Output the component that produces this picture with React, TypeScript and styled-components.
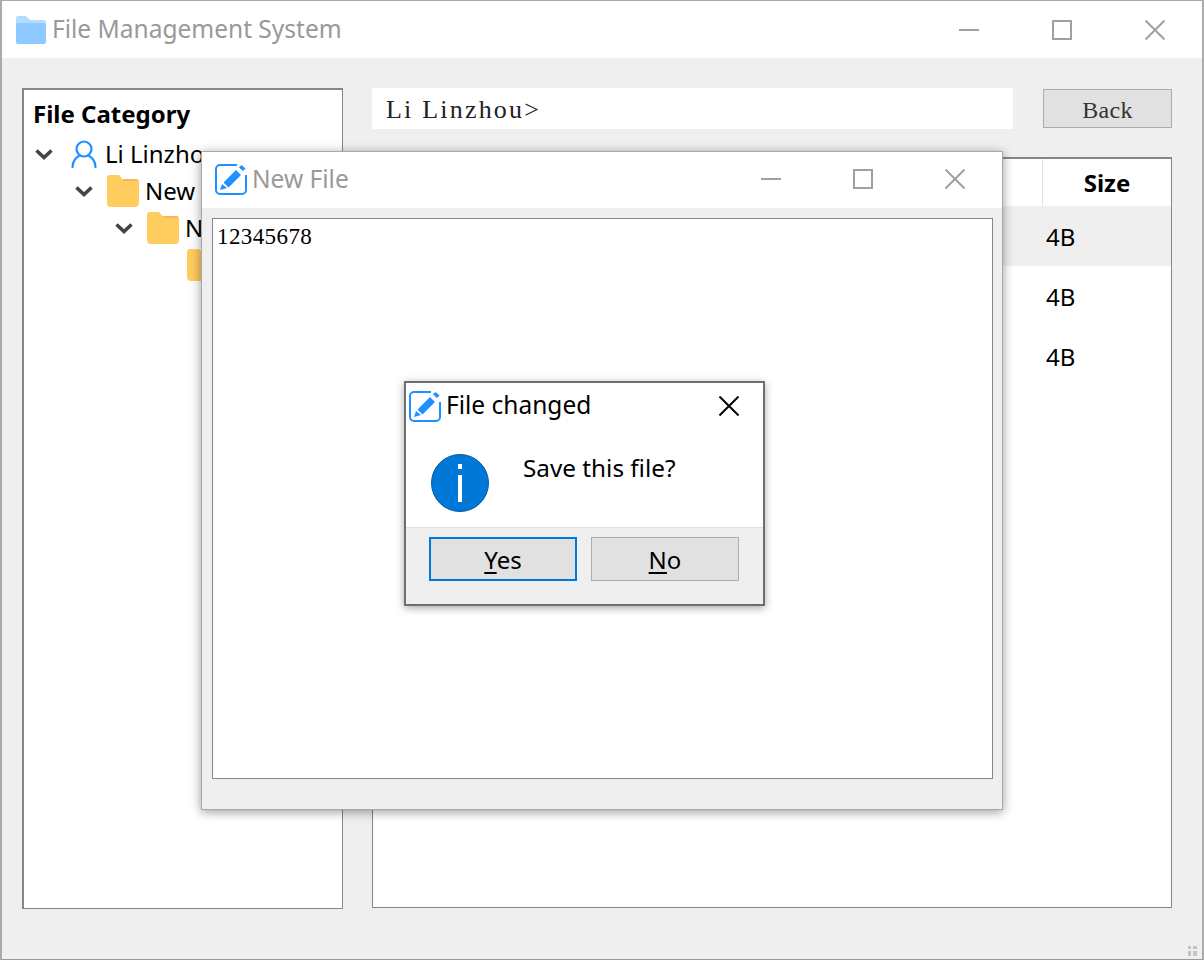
import React from 'react';
import styled, { createGlobalStyle } from 'styled-components';

const GlobalStyle = createGlobalStyle`
    html, body {
        margin: 0;
        padding: 0;
        background: #efefef;
    }
    * {
        box-sizing: border-box;
    }
`;

const UI_FONT = `"Noto Sans", "Open Sans", sans-serif`;
const SERIF_FONT = `"Liberation Serif", "DejaVu Serif", serif`;

const Screen = styled.div`
    position: relative;
    width: 1204px;
    height: 960px;
    overflow: hidden;
    display: flex;
    flex-direction: column;
    background: #efefef;
    border-top: 1px solid #aaaaaa;
    border-left: 2px solid #aaaaaa;
    border-right: 2px solid #aaaaaa;
    border-bottom: 1px solid #9a9a9a;
    font-family: ${UI_FONT};
    color: #000;
`;

const TitleBar = styled.div`
    height: 57px;
    flex: none;
    display: flex;
    align-items: center;
    background: #fff;
    padding-left: 14px;
`;

const TitleText = styled.span`
    font-size: 24.5px;
    color: #999999;
    margin: -2px 0 0 6px;
    white-space: nowrap;
    flex: 1;
`;

const WinControls = styled.div<{ $width: number }>`
    display: flex;
    width: ${p => p.$width}px;
    margin-right: 37px;
    justify-content: space-between;
    align-items: center;
    flex: none;
`;

const Main = styled.div`
    flex: 1;
    display: flex;
    gap: 29px;
    padding: 30px 30px 50px 20px;
    border-bottom: 1px solid #fff;
`;

const TreePanel = styled.div`
    width: 321px;
    height: 821px;
    flex: none;
    background: #fff;
    border: 2px solid #85858d;
    border-right-width: 1px;
    border-bottom-width: 1px;
    padding: 7px 0 0 9px;
`;

const TreeTitle = styled.div`
    font-size: 24px;
    font-weight: 700;
    line-height: 34px;
    margin-bottom: 4px;
`;

const TreeRow = styled.div<{ $level: number }>`
    display: flex;
    align-items: center;
    height: 37px;
    padding-left: ${p => p.$level * 40}px;
    font-size: 24px;
    white-space: nowrap;
`;

const TreeArrow = styled.span`
    width: 24px;
    display: flex;
    align-items: center;
    margin-left: 1px;
    margin-right: 9px;
    flex: none;
`;

const TreeLabel = styled.span<{ $user?: boolean }>`
    margin-left: ${p => (p.$user ? 8 : 6)}px;
`;

const UserSlot = styled.span`
    display: flex;
    margin-left: 4px;
`;

const RightColumn = styled.div`
    flex: 1;
    display: flex;
    flex-direction: column;
`;

const PathRow = styled.div`
    display: flex;
    justify-content: space-between;
    align-items: center;
    height: 41px;
    margin-bottom: 28px;
`;

const PathBar = styled.div`
    width: 641px;
    height: 41px;
    background: #fff;
    font-family: ${SERIF_FONT};
    font-size: 26px;
    letter-spacing: 2.2px;
    line-height: 43px;
    padding-left: 14px;
    color: #222;
`;

const BackButton = styled.button`
    width: 129px;
    height: 39px;
    padding: 3px 0 0;
    background: #e1e1e1;
    border: 1px solid #adadad;
    font-family: ${SERIF_FONT};
    font-size: 24px;
    letter-spacing: 0.3px;
    color: #333;
`;

const FileTable = styled.div`
    width: 800px;
    height: 751px;
    background: #fff;
    border: 1px solid #85858d;
    border-top-width: 2px;
`;

const TableHeader = styled.div`
    display: flex;
    justify-content: flex-end;
    height: 47px;
`;

const HeaderCell = styled.div`
    width: 129px;
    border-left: 1px solid #e3e3e3;
    font-size: 24px;
    font-weight: 700;
    line-height: 48px;
    text-align: center;
`;

const TableRow = styled.div<{ $selected?: boolean }>`
    display: flex;
    justify-content: flex-end;
    height: 60px;
    background: ${p => (p.$selected ? '#efefef' : '#fff')};
`;

const SizeCell = styled.div`
    width: 129px;
    font-size: 24px;
    line-height: 61px;
    padding-left: 4px;
`;

const SizeGrip = styled.svg`
    position: absolute;
    right: 5px;
    bottom: 3px;
`;

const EditorWindow = styled.div`
    position: absolute;
    left: 199px;
    top: 150px;
    width: 802px;
    height: 659px;
    display: flex;
    flex-direction: column;
    background: #efefef;
    border: 1px solid #a8a8a8;
    box-shadow: 0 2px 10px rgba(0, 0, 0, 0.4);
`;

const EditorTitleBar = styled(TitleBar)`
    height: 56px;
    padding: 0 0 2px 13px;

    ${TitleText} {
        margin-left: 5px;
    }
`;

const EditorBody = styled.div`
    flex: 1;
    padding: 10px 9px 30px 10px;
`;

const EditorText = styled.div`
    height: 561px;
    background: #fff;
    border: 1px solid #85858d;
    padding: 3px 4px;
    font-family: ${SERIF_FONT};
    font-size: 23px;
    letter-spacing: 0.4px;
    line-height: 30px;
`;

const MessageBox = styled.div`
    position: absolute;
    left: 402px;
    top: 380px;
    width: 361px;
    height: 225px;
    display: flex;
    flex-direction: column;
    background: #fff;
    border: 2px solid #6e6e6e;
    box-shadow: 0 2px 8px rgba(0, 0, 0, 0.35);
`;

const MessageTitle = styled.div`
    height: 45px;
    flex: none;
    display: flex;
    align-items: center;
    padding-left: 3px;
    font-size: 24.5px;
`;

const MessageTitleText = styled.span`
    margin: -3px 0 0 5px;
    flex: 1;
`;

const MessageClose = styled.span`
    display: flex;
    margin-right: 24px;
`;

const MessageContent = styled.div`
    flex: 1;
    display: flex;
    align-items: flex-start;
    padding: 26px 0 0 25px;
    font-size: 24.3px;
`;

const InfoIcon = styled.div`
    width: 58px;
    height: 58px;
    flex: none;
    border-radius: 50%;
    background: #0078d7;
    border: 1px solid #0a5aa0;
    display: flex;
    align-items: center;
    justify-content: center;
`;

const MessageText = styled.div`
    margin-left: 34px;
    margin-top: -4px;
    line-height: 36px;
`;

const ButtonBar = styled.div`
    height: 77px;
    flex: none;
    display: flex;
    gap: 14px;
    padding: 9px 0 0 23px;
    background: #efefef;
    border-top: 1px solid #dfdfdf;
`;

const DialogButton = styled.button<{ $focused?: boolean }>`
    width: 148px;
    height: 44px;
    padding: 0;
    background: #e1e1e1;
    border: ${p => (p.$focused ? '2px solid #0078d7' : '1px solid #adadad')};
    font-family: ${UI_FONT};
    font-size: 24px;
    color: #000;
`;

const Mnemonic = styled.span`
    text-decoration: underline;
    text-underline-offset: 3px;
`;

const Minimize = ({ color = '#a0a0a0' }: { color?: string }) => (
    <svg width="20" height="20" viewBox="0 0 20 20">
        <path d="M0 10h20" stroke={color} strokeWidth="2" />
    </svg>
);

const Maximize = ({ color = '#a0a0a0' }: { color?: string }) => (
    <svg width="20" height="20" viewBox="0 0 20 20">
        <rect x="1" y="1" width="18" height="18" fill="none" stroke={color} strokeWidth="2" />
    </svg>
);

const CloseIcon = ({ color = '#a0a0a0', sw = 2 }: { color?: string; sw?: number }) => (
    <svg width="20" height="20" viewBox="0 0 20 20">
        <path d="M0.5 0.5l19 19M19.5 0.5l-19 19" stroke={color} strokeWidth={sw} fill="none" />
    </svg>
);

const BlueFolder = () => (
    <svg width="30" height="28" viewBox="0 0 30 28">
        <path d="M0 2a2 2 0 0 1 2-2h8l4 4h14a2 2 0 0 1 2 2v3H0z" fill="#b5dcff" />
        <path d="M0 7h28a2 2 0 0 1 2 2v17a2 2 0 0 1-2 2H2a2 2 0 0 1-2-2z" fill="#8ecaff" />
    </svg>
);

const YellowFolder = () => (
    <svg width="32" height="32" viewBox="0 0 32 32" style={{ flex: 'none' }}>
        <path d="M16 4h13a3 3 0 0 1 3 3v3H16z" fill="#f9b55a" />
        <path d="M0 3a3 3 0 0 1 3-3h9l5 6h15v22a4 4 0 0 1-4 4H4a4 4 0 0 1-4-4z" fill="#ffcd5e" />
    </svg>
);

const EditIcon = () => (
    <svg width="32" height="32" viewBox="0 0 32 32" style={{ flex: 'none' }}>
        <path
            d="M22 2H5a4 4 0 0 0-4 4v21a4 4 0 0 0 4 4h22a4 4 0 0 0 4-4V12"
            fill="none"
            stroke="#1e90ff"
            strokeWidth="2"
        />
        <path d="M21 7l5 5-12.500 12.500-5-5zM7 21l5 4-7 2zM24 4.500l2.500-2.500 4 3.500-2.500 2.500z" fill="#1e90ff" />
    </svg>
);

const UserIcon = () => (
    <svg width="26" height="28" viewBox="0 0 26 28" style={{ flex: 'none' }}>
        <circle cx="13" cy="9" r="7.500" fill="none" stroke="#1e90ff" strokeWidth="2.200" />
        <path d="M1.500 27c0-6 4-10 6.500-11M24.500 27c0-6-4-10-6.500-11" fill="none" stroke="#1e90ff" strokeWidth="2.200" strokeLinecap="round" />
    </svg>
);

const ChevronDown = () => (
    <svg width="20" height="12" viewBox="0 0 20 12">
        <path d="M2.500 2.500L10 9.500l7.500-7" fill="none" stroke="#444" strokeWidth="3.600" />
    </svg>
);

const App: React.FC = () => {
    return (
        <Screen>
            <GlobalStyle />
            <TitleBar>
                <BlueFolder />
                <TitleText>File Management System</TitleText>
                <WinControls $width={206}>
                    <Minimize />
                    <Maximize />
                    <CloseIcon />
                </WinControls>
            </TitleBar>
            <Main>
                <TreePanel>
                    <TreeTitle>File Category</TreeTitle>
                    <TreeRow $level={0}>
                        <TreeArrow>
                            <ChevronDown />
                        </TreeArrow>
                        <UserSlot>
                            <UserIcon />
                        </UserSlot>
                        <TreeLabel $user>Li Linzho</TreeLabel>
                    </TreeRow>
                    <TreeRow $level={1}>
                        <TreeArrow>
                            <ChevronDown />
                        </TreeArrow>
                        <YellowFolder />
                        <TreeLabel>New</TreeLabel>
                    </TreeRow>
                    <TreeRow $level={2}>
                        <TreeArrow>
                            <ChevronDown />
                        </TreeArrow>
                        <YellowFolder />
                        <TreeLabel>N</TreeLabel>
                    </TreeRow>
                    <TreeRow $level={3}>
                        <TreeArrow />
                        <YellowFolder />
                    </TreeRow>
                </TreePanel>
                <RightColumn>
                    <PathRow>
                        <PathBar>Li Linzhou&gt;</PathBar>
                        <BackButton>Back</BackButton>
                    </PathRow>
                    <FileTable>
                        <TableHeader>
                            <HeaderCell>Size</HeaderCell>
                        </TableHeader>
                        <TableRow $selected>
                            <SizeCell>4B</SizeCell>
                        </TableRow>
                        <TableRow>
                            <SizeCell>4B</SizeCell>
                        </TableRow>
                        <TableRow>
                            <SizeCell>4B</SizeCell>
                        </TableRow>
                    </FileTable>
                </RightColumn>
            </Main>
            <SizeGrip width="9" height="10" viewBox="0 0 9 10">
                <path d="M0 0h3v3H0zM5 0h4v3H5zM0 5h3v5H0zM5 5h4v5H5z" fill="#c4c4c4" />
            </SizeGrip>

            <EditorWindow>
                <EditorTitleBar>
                    <EditIcon />
                    <TitleText>New File</TitleText>
                    <WinControls $width={204}>
                        <Minimize />
                        <Maximize />
                        <CloseIcon />
                    </WinControls>
                </EditorTitleBar>
                <EditorBody>
                    <EditorText>12345678</EditorText>
                </EditorBody>
            </EditorWindow>

            <MessageBox>
                <MessageTitle>
                    <EditIcon />
                    <MessageTitleText>File changed</MessageTitleText>
                    <MessageClose>
                        <CloseIcon color="#000" />
                    </MessageClose>
                </MessageTitle>
                <MessageContent>
                    <InfoIcon>
                        <svg width="6" height="38" viewBox="0 0 6 38">
                            <path d="M1 0h4v5H1zM1 11h4v27H1z" fill="#fff" />
                        </svg>
                    </InfoIcon>
                    <MessageText>Save this file?</MessageText>
                </MessageContent>
                <ButtonBar>
                    <DialogButton $focused>
                        <Mnemonic>Y</Mnemonic>es
                    </DialogButton>
                    <DialogButton>
                        <Mnemonic>N</Mnemonic>o
                    </DialogButton>
                </ButtonBar>
            </MessageBox>
        </Screen>
    );
};

export default App;
